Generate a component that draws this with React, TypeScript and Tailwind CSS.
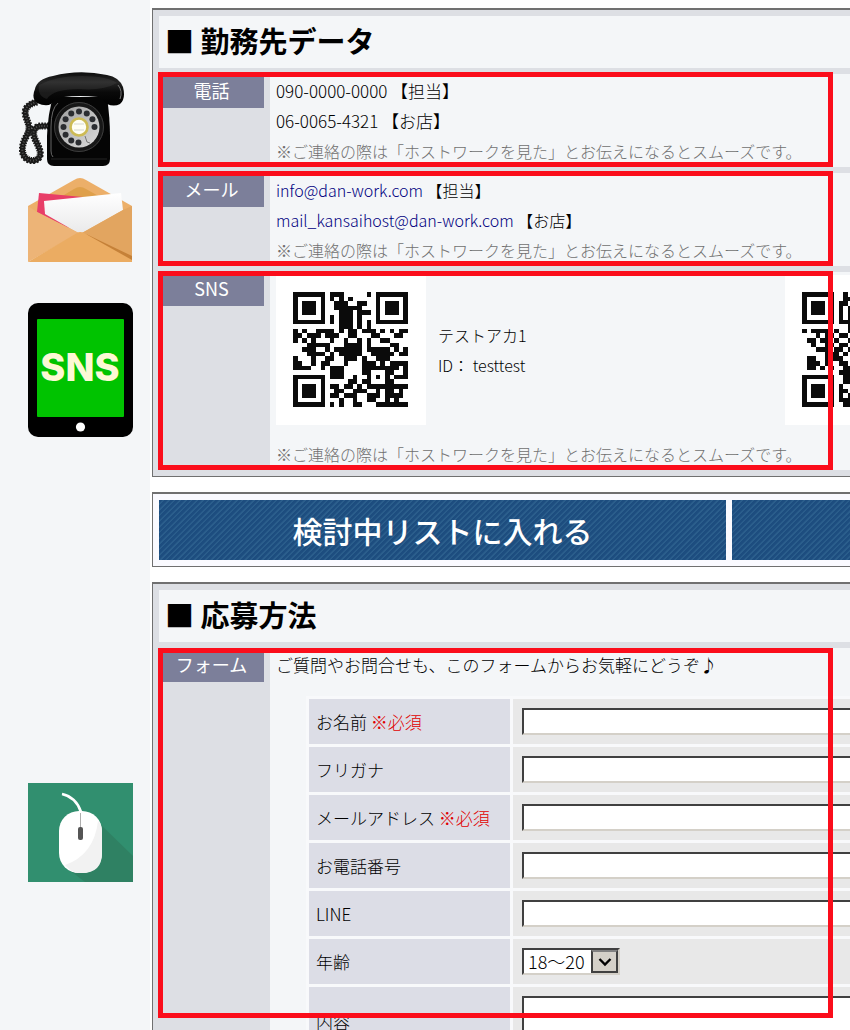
import React from "react";

type PanelProps = { title: string; children: React.ReactNode };
type RowProps = { label: string; frame: string; children: React.ReactNode };
type FieldProps = { id: string; label: string; required?: boolean; children: React.ReactNode };

const NOTE = "※ご連絡の際は「ホストワークを見た」とお伝えになるとスムーズです。";

const QR_FIRST = [
  "1111111011100000101111111",
  "1000001010101000001000001",
  "1011101001110011001011101",
  "1011101001111110001011101",
  "1011101000111011101011101",
  "1000001010111010001000001",
  "1111111010111010101111111",
  "0000000000111010100000000",
  "1010011110101101110101011",
  "1101110111001100011000110",
  "1010100010010010100110000",
  "0001111100011110100001100",
  "0011100101111110111110101",
  "0001111010111110011111011",
  "1000100110011101001110000",
  "1100101100010001110101111",
  "1111001011100001111111101",
  "0000000011100001100011001",
  "1111111011100100101010111",
  "1000001000001101100011000",
  "1011101011011010111111111",
  "1011101001100111001011010",
  "1011101011011100111011110",
  "1000001000100100110010100",
  "1111111010100110001111111",
];

const QR_SECOND = [
  "1111111001011010001111111",
  "1000001001101100101000001",
  "1011101011011010101011101",
  "1011101010110011001011101",
  "1011101010101101101011101",
  "1000001010111000101000001",
  "1111111011101010101111111",
  "0000000000110110000000000",
  "1011110100101101110101011",
  "0001011011001100011000110",
  "0110110100110010100110000",
  "0010011011011110100001100",
  "0001110110111110111110101",
  "0000011101011110011111011",
  "0110011110011101001110000",
  "0111010011010001110101111",
  "0110101001100001111101101",
  "0000000011110001100011001",
  "1111111001110100101010111",
  "1000001001101101100011000",
  "1011101010011010111111111",
  "1011101011010111001011010",
  "1011101010111100111011110",
  "1000001011100100110010100",
  "1111111001100110001111111",
];

const QrCode = ({ rows, name }: { rows: string[]; name: string }) => (
  <svg viewBox="0 0 150 150" role="img" aria-label={name} className="size-[150px] shrink-0 bg-white">
    <g transform="translate(17 17) scale(4.6)" fill="#0b0b0b" shapeRendering="crispEdges">
      {rows.map((row, y) =>
        row.split("").map((cell, x) =>
          cell === "1" ? <rect key={`${x}-${y}`} x={x} y={y} width="1" height="1" /> : null
        )
      )}
    </g>
  </svg>
);

const PhoneIcon = () => (
  <svg viewBox="0 0 106 96" className="w-[106px]" aria-hidden="true">
    <defs>
      <linearGradient id="handset" x1="0" y1="0" x2="0" y2="1">
        <stop offset="0" stopColor="#0c0c0c" />
        <stop offset="0.3" stopColor="#262626" />
        <stop offset="0.6" stopColor="#0a0a0a" />
        <stop offset="1" stopColor="#000" />
      </linearGradient>
      <linearGradient id="dial" x1="0" y1="0" x2="1" y2="1">
        <stop offset="0" stopColor="#a0a0a0" />
        <stop offset="1" stopColor="#dcdcdc" />
      </linearGradient>
    </defs>
    <path
      d="M18 31C10 33 4 37 7 46C10 55 12 57 7 66C2 75 2 84 8 88C15 92 23 88 21 80C19 72 13 66 15 60C17 54 21 55 31 55"
      fill="none" stroke="#1a1a1a" strokeWidth="5"
    />
    <path
      d="M18 31C10 33 4 37 7 46C10 55 12 57 7 66C2 75 2 84 8 88C15 92 23 88 21 80C19 72 13 66 15 60C17 54 21 55 31 55"
      fill="none" stroke="#1a1a1a" strokeWidth="7" strokeDasharray="1.6 1.2"
    />
    <path
      d="M18 31C10 33 4 37 7 46C10 55 12 57 7 66C2 75 2 84 8 88C15 92 23 88 21 80C19 72 13 66 15 60C17 54 21 55 31 55"
      fill="none" stroke="#5a5a5a" strokeWidth="2" strokeDasharray="0.8 2"
    />
    <path d="M34 26H88Q91 47 91 65V88Q91 95 84 95H35Q28 95 28 88V65Q29 42 34 26Z" fill="#050505" />
    <path d="M39 32Q32 38 32 56V80Q32 84 34 86" fill="none" stroke="#666" strokeWidth="1" />
    <path d="M32 88H88" stroke="#242424" />
    <path
      d="M16 18Q18 8 34 5Q60 -2 88 4Q100 6 104 16Q107 28 101 33Q95 36 88 33Q84 29 79 26Q60 24 45 26Q36 27 32 33Q27 36 18 32Q12 27 16 18Z"
      fill="url(#handset)"
    />
    <path d="M20 14Q36 5 63 5Q88 5 98 12Q84 20 60 18Q34 18 28 28Q18 25 20 14Z" fill="#555" opacity="0.25" />
    <path d="M99 14Q104 20 101 28" fill="none" stroke="#777" />
    <circle cx="60" cy="56" r="25" fill="#171717" />
    <circle cx="60" cy="56" r="24.5" fill="none" stroke="#3c3c3c" />
    <circle cx="60" cy="56" r="20.500" fill="url(#dial)" />
    {[-90, -60, -30, 0, -120, -150, -180, -210, -240, -268].map((deg) => (
      <circle
        key={deg}
        cx={60 + 15.5 * Math.cos((deg * Math.PI) / 180)}
        cy={56 + 15.5 * Math.sin((deg * Math.PI) / 180)}
        r="3"
        fill="#2b2d31"
      />
    ))}
    <circle cx="60" cy="56" r="8.500" fill="#fffef5" stroke="#cdbb55" strokeWidth="2.600" />
    <path d="M55 53H65M55 59H65" stroke="#d5d7cf" />
    <path d="M66 65L68 71L71 72" fill="none" stroke="#777" />
  </svg>
);

const MailIcon = () => (
  <svg viewBox="0 0 105 84" className="w-[105px]" aria-hidden="true">
    <defs>
      <linearGradient id="paper" x1="0" y1="0" x2="0" y2="1">
        <stop offset="0" stopColor="#fff" />
        <stop offset="1" stopColor="#e9e9ea" />
      </linearGradient>
    </defs>
    <path d="M0 28L46 2Q52 -2 58 2L104 28V60H0Z" fill="#ecaf69" />
    <path d="M31 20L46 11Q52 7 58 11L74 20V32H31Z" fill="#dfa04b" />
    <path d="M11 15L66 20L40 50L9 34Z" fill="#e83e68" />
    <path d="M16 23L93 15L95 32L52 56L17 36Z" fill="url(#paper)" />
    <path d="M0 28L9 34L51 55L0 84Z" fill="#edb477" />
    <path d="M104 28L95 32L54 55L104 84Z" fill="#e2a560" />
    <path d="M58 56L104 78V84H92Z" fill="#c58138" />
    <path d="M0 84L49 55Q52 53 56 55L104 82V84Z" fill="#ebac62" />
  </svg>
);

const TabletIcon = () => (
  <svg viewBox="0 0 105 134" className="w-[105px]" role="img" aria-label="SNS">
    <rect width="105" height="134" rx="10" fill="#000" />
    <rect x="9" y="16" width="87" height="98" rx="1" fill="#00c300" />
    <text x="52" y="78" textAnchor="middle" fontFamily="Inter, sans-serif" fontWeight="800" fontSize="38" fill="#fdf8d5">
      SNS
    </text>
    <circle cx="52.500" cy="124" r="4.600" fill="#fff" />
  </svg>
);

const MouseIcon = () => (
  <svg viewBox="0 0 105 99" className="w-[105px]" aria-hidden="true">
    <rect width="105" height="99" fill="#318f6f" />
    <path d="M70 39L105 73V99H57L40 86Z" fill="#2f8163" />
    <path d="M34 11Q48 14 53 29" fill="none" stroke="#fff" strokeWidth="2.600" />
    <rect x="31" y="28" width="43" height="62" rx="20" fill="#fff" />
    <path d="M70 38Q74 42 74 50V70Q74 90 54 90H51Q44 90 37 82Q66 72 70 38Z" fill="#f2f2f2" />
    <path d="M52.500 30V45" stroke="#999" strokeWidth="0.800" />
    <rect x="50" y="44" width="5" height="13" rx="2" fill="#555" />
  </svg>
);

const Panel = ({ title, children }: PanelProps) => (
  <section className="flex flex-col gap-1.5 border border-t-2 border-[#707070] bg-[#dddfe4] p-1.5">
    <h2 className="bg-[#f4f6f8] px-1.5 pt-1.5 pb-2.5 text-[29px] leading-9 font-bold">■ {title}</h2>
    {children}
  </section>
);

const Row = ({ label, frame, children }: RowProps) => (
  <div className="relative flex gap-1.5">
    <h3 className="h-[34px] w-[105px] shrink-0 bg-[#7c7f9a] pt-px text-center text-lg leading-[30px] font-normal text-white">
      {label}
    </h3>
    <div className="min-w-0 flex-1 bg-[#f4f6f8] px-1.5 pt-0.5 pb-px">{children}</div>
    <div className={`pointer-events-none absolute -left-px w-[675px] border-5 border-[#fb0d1b] ${frame}`} />
  </div>
);

const Note = () => <p className="text-base leading-[30px] text-[#707070]">{NOTE}</p>;

const Field = ({ id, label, required, children }: FieldProps) => (
  <tr>
    <th scope="row" className="w-[201px] bg-[#dcdde6] px-[7px] text-left font-light">
      <label htmlFor={id}>
        {label} {required && <span className="text-[#e00000]">※必須</span>}
      </label>
    </th>
    <td className="bg-[#e8e8e8] px-[9px] py-[9px]">{children}</td>
  </tr>
);

const box =
  "block w-full border-2 border-t-[#404040] border-r-[#d4d0c8] border-b-[#d4d0c8] border-l-[#404040] bg-white px-1 outline-none";

const App = () => {
  return (
    <div className="flex min-h-screen overflow-x-hidden bg-white font-['Noto_Sans_CJK_JP',sans-serif] text-[17px] font-light text-black">
      <aside className="flex w-[150px] shrink-0 flex-col bg-[#f4f6f8] pt-[71px] pl-7">
        <div className="-ml-[9px]">
          <PhoneIcon />
        </div>
        <div className="mt-[11px]">
          <MailIcon />
        </div>
        <div className="mt-[41px]">
          <TabletIcon />
        </div>
        <div className="mt-[346px]">
          <MouseIcon />
        </div>
      </aside>

      <main className="flex min-w-[1156px] flex-1 flex-col gap-[15px] pt-2 pl-0.5">
        <Panel title="勤務先データ">
          <Row label="電話" frame="-top-0.5 bottom-0">
            <p className="leading-[30px]">090-0000-0000 【担当】</p>
            <p className="leading-[30px]">06-0065-4321 【お店】</p>
            <Note />
          </Row>
          <Row label="メール" frame="-top-0.5 bottom-0">
            <p className="text-base leading-[30px]">
              <a href="mailto:info@dan-work.com" className="text-[#000080]">info@dan-work.com</a> 【担当】
            </p>
            <p className="text-base leading-[30px]">
              <a href="mailto:mail_kansaihost@dan-work.com" className="text-[#000080]">
                mail_kansaihost@dan-work.com
              </a>{" "}
              【お店】
            </p>
            <Note />
          </Row>
          <Row label="SNS" frame="-top-px bottom-0">
            <div className="mb-3.5 grid grid-cols-2 pt-px">
              <div className="flex items-center gap-3">
                <QrCode rows={QR_FIRST} name="テストアカ1" />
                <div className="text-base leading-[30px]">
                  <p>テストアカ1</p>
                  <p>ID： testtest</p>
                </div>
              </div>
              <div>
                <QrCode rows={QR_SECOND} name="QR" />
              </div>
            </div>
            <Note />
          </Row>
        </Panel>

        <div className="grid grid-cols-2 gap-1.5 border border-t-2 border-[#707070] bg-[#fafaff] p-1.5">
          <button
            type="button"
            className="h-[60px] bg-[repeating-linear-gradient(135deg,#1d4d7f_0px,#1d4d7f_2px,#2b5e8c_3px,#2b5e8c_4px)] text-3xl font-medium text-white"
          >
            検討中リストに入れる
          </button>
          <button
            type="button"
            aria-label="応募"
            className="h-[60px] bg-[repeating-linear-gradient(135deg,#1d4d7f_0px,#1d4d7f_2px,#2b5e8c_3px,#2b5e8c_4px)]"
          />
        </div>

        <Panel title="応募方法">
          <Row label="フォーム" frame="top-0 h-[370px]">
            <p className="leading-[30px]">ご質問やお問合せも、このフォームからお気軽にどうぞ♪</p>
            <form className="mt-4 px-[30px] pb-4">
              <table className="w-full border-separate border-spacing-[3px] bg-[#f8f9fb]">
                <tbody>
                  <Field id="name" label="お名前" required>
                    <input id="name" type="text" className={`${box} h-[27px]`} />
                  </Field>
                  <Field id="kana" label="フリガナ">
                    <input id="kana" type="text" className={`${box} h-[27px]`} />
                  </Field>
                  <Field id="mail" label="メールアドレス" required>
                    <input id="mail" type="email" className={`${box} h-[27px]`} />
                  </Field>
                  <Field id="tel" label="お電話番号">
                    <input id="tel" type="tel" className={`${box} h-[27px]`} />
                  </Field>
                  <Field id="line" label="LINE">
                    <input id="line" type="text" className={`${box} h-[27px]`} />
                  </Field>
                  <Field id="age" label="年齢">
                    <div className="relative w-[98px]">
                      <select id="age" className={`${box} h-[27px] appearance-none text-lg leading-[23px]`}>
                        <option>18～20</option>
                        <option>21～25</option>
                        <option>26～30</option>
                      </select>
                      <span className="pointer-events-none absolute inset-y-0.5 right-0.5 flex w-[27px] items-center justify-center border-2 border-[#404040] border-t-[#808080] bg-[#d4d0c8]">
                        <svg viewBox="0 0 14 10" className="w-3.5" aria-hidden="true">
                          <path d="M1.500 2L7 7.500L12.500 2" fill="none" stroke="#000" strokeWidth="2.400" />
                        </svg>
                      </span>
                    </div>
                  </Field>
                  <Field id="body" label="内容">
                    <textarea id="body" className={`${box} h-[52px] resize-none`} />
                  </Field>
                </tbody>
              </table>
            </form>
          </Row>
        </Panel>
      </main>
    </div>
  );
};

export default App;
